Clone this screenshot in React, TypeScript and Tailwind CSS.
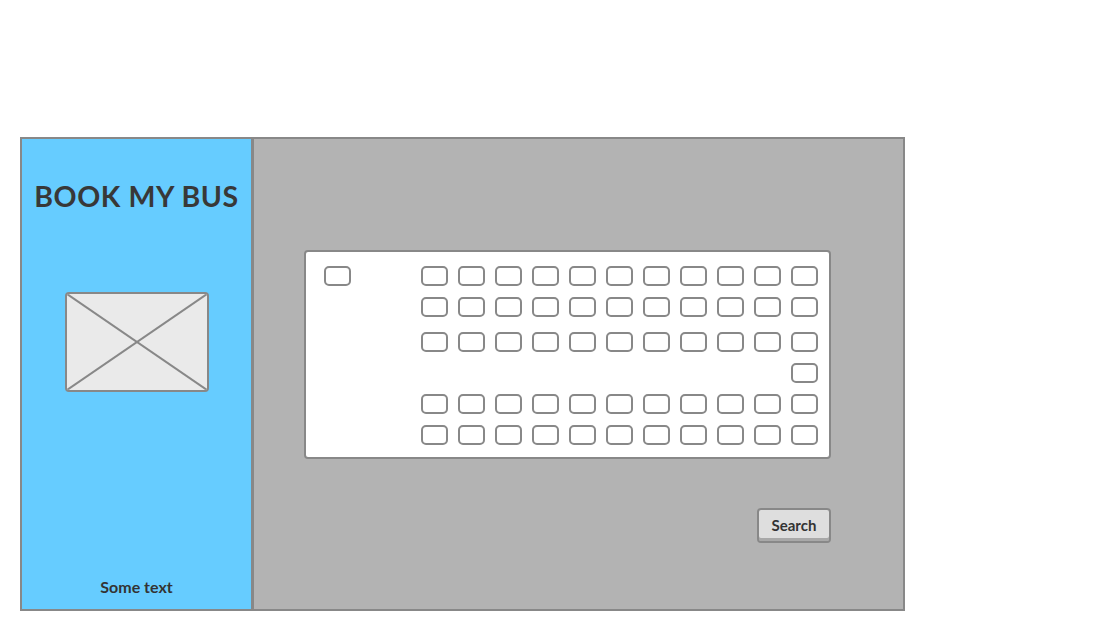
const COLS = 11;

function Seat() {
  return <div className="w-[27px] h-[20px] rounded-[5px] border-2 border-[#888888] bg-white" />;
}

function SeatRow({ only }: { only?: boolean }) {
  return (
    <div className="flex justify-end gap-[10px]">
      {only ? <Seat /> : Array.from({ length: COLS }).map((_, i) => <Seat key={i} />)}
    </div>
  );
}

export default function App() {
  return (
    <div className="w-[1102px] h-[631px] bg-white pt-[137px] pl-[20px]" style={{ fontFamily: 'Lato, "Open Sans", sans-serif' }}>
      <div className="flex w-[885px] h-[474px] border-2 border-[#888888]">
        {/* sidebar */}
        <div className="w-[232px] bg-[#66ccff] flex flex-col items-center border-r-[3px] border-[#888888]">
          <h1 className="mt-[40px] text-[28.5px] leading-[34px] font-bold tracking-[0.6px] text-[#383838]">BOOK MY BUS</h1>
          <div className="mt-[79px] w-[144px] h-[100px] rounded-[4px] border-2 border-[#888888] bg-[#eaeaea] overflow-hidden">
            <svg width="140" height="96" viewBox="0 0 140 96" className="block">
              <line x1="0" y1="0" x2="140" y2="96" stroke="#888888" strokeWidth="2" />
              <line x1="140" y1="0" x2="0" y2="96" stroke="#888888" strokeWidth="2" />
            </svg>
          </div>
          <div className="mt-auto mb-[10px] text-[16px] font-bold text-[#333333]">Some text</div>
        </div>

        {/* main */}
        <div className="flex-1 bg-[#b3b3b3] pl-[50px] pt-[111px]">
          <div className="w-[527px] h-[209px] rounded-[4px] border-2 border-[#888888] bg-white pt-[14px] pl-[18px] pr-[11px] flex">
            <Seat />
            <div className="flex-1 flex flex-col">
              <SeatRow />
              <div className="mt-[11px]"><SeatRow /></div>
              <div className="mt-[15px]"><SeatRow /></div>
              <div className="mt-[11px]"><SeatRow only /></div>
              <div className="mt-[11px]"><SeatRow /></div>
              <div className="mt-[11px]"><SeatRow /></div>
            </div>
          </div>
          <div className="w-[527px] flex justify-end mt-[49px]">
            <button className="w-[74px] h-[35px] rounded-[4px] border-2 border-[#888888] bg-[#dedede] shadow-[inset_0_-3px_0_#a8a8a8] text-[15px] font-bold text-[#333333]">
              Search
            </button>
          </div>
        </div>
      </div>
    </div>
  );
}
